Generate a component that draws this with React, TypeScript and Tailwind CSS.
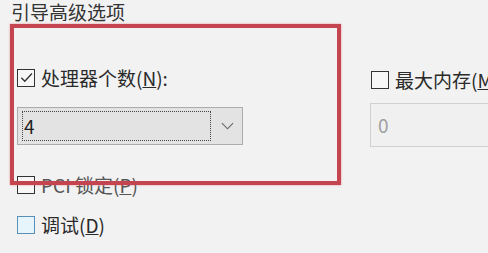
import { ReactNode } from 'react'

const font = { fontFamily: '"Noto Sans CJK SC", "Noto Sans", sans-serif' }

function Box({ checked = false, hover = false }: { checked?: boolean; hover?: boolean }) {
  return (
    <span
      className={`flex h-[18px] w-[18px] shrink-0 items-center justify-center border ${
        hover ? 'border-[#5a8fb8] bg-[#e6f5fc]' : 'border-[#333] bg-[#f7f7f7]'
      }`}
    >
      {checked && (
        <svg viewBox="0 0 16 16" className="h-[15px] w-[15px]" fill="none" stroke="#333" strokeWidth="1.4">
          <path d="M2.5 8.2 L6.2 12 L13.8 3.8" />
        </svg>
      )}
    </span>
  )
}

function Check({ children, checked, hover, muted }: { children: ReactNode; checked?: boolean; hover?: boolean; muted?: boolean }) {
  return (
    <div className="flex h-[19px] items-center gap-[6px]">
      <Box checked={checked} hover={hover} />
      <span className={`whitespace-nowrap text-[19px] leading-[19px] ${muted ? 'text-[#555]' : 'text-[#2a2a2a]'}`}>{children}</span>
    </div>
  )
}

export default function App() {
  return (
    <div className="relative h-[253px] w-[488px] overflow-hidden bg-[#f2f2f2]" style={font}>
      <div className="pl-[11px] pt-[1px] text-[19px] leading-[21px] text-[#333]">引导高级选项</div>

      <div className="flex">
        <div className="ml-[17px] flex w-[226px] shrink-0 flex-col">
          <div className="mt-[46px]">
            <Check checked>
              处理器个数(<span className="underline">N</span>):
            </Check>
          </div>
          <div className="mt-[20px] flex h-[38px] items-center border border-[#adadad] bg-[#e3e3e3] pl-[4px] pr-[8px]">
            <div className="flex h-[30px] flex-1 items-center border border-dotted border-[#444] pl-[1px] text-[19px] text-[#222]">
              4
            </div>
            <svg viewBox="0 0 14 8" className="ml-[10px] h-[8px] w-[13px]" fill="none" stroke="#666" strokeWidth="1.2">
              <path d="M1 1 L7 7 L13 1" />
            </svg>
          </div>
          <div className="mt-[30px]">
            <Check muted>
              PCI 锁定(<span className="underline">P</span>)
            </Check>
          </div>
          <div className="mt-[21px]">
            <Check hover>
              调试(<span className="underline">D</span>)
            </Check>
          </div>
        </div>

        <div className="ml-[127px] flex shrink-0 flex-col">
          <div className="mt-[48px] pl-[1px]">
            <Check>
              最大内存(<span className="underline">M</span>)
            </Check>
          </div>
          <div className="mt-[14px] flex h-[44px] w-[140px] items-center border border-[#d0d0d0] bg-[#f0f0f0] pl-[7px] text-[19px] text-[#a0a0a0]">
            0
          </div>
        </div>
      </div>

      <div className="pointer-events-none absolute left-[10px] top-[24px] h-[161px] w-[331px] border-4 border-[#c4454f] shadow-[0_0_2px_rgba(230,90,100,0.6)]" />
    </div>
  )
}
